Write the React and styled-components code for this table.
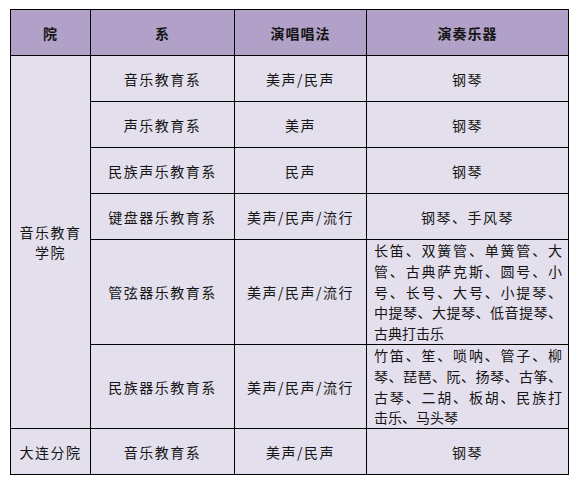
import React from "react";
import styled, { createGlobalStyle } from "styled-components";

const Global = createGlobalStyle`
  html, body {
    margin: 0;
    padding: 0;
    background: #ffffff;
  }
  body {
    font-family: "Noto Sans CJK SC", "Noto Sans", sans-serif;
    color: #151515;
  }
`;

const Page = styled.div`
  padding: 9px 0 0 10px;
`;

const Table = styled.table`
  border-collapse: collapse;
  table-layout: fixed;
  width: 558px;
  border: 1.5px solid #000;
`;

const HeadCell = styled.th`
  background: #b1a0c7;
  height: 45px;
  padding: 0;
  border: 1.5px solid #000;
  font-size: 14px;
  font-weight: 700;
  letter-spacing: 1px;
  text-align: center;
  vertical-align: middle;
`;

const Cell = styled.td`
  background: #e4dfec;
  height: ${p => p.$h || 45}px;
  padding: ${p => (p.$list ? "0 6px 0 7px" : "0 4px")};
  border: 1.5px solid #000;
  font-size: 14px;
  line-height: 20px;
  letter-spacing: ${p => (p.$list ? "0" : "1.5px")};
  text-align: center;
  vertical-align: middle;
`;

const Line = styled.span`
  display: block;
  white-space: nowrap;
  line-height: 20.8px;
  text-align: ${p => (p.$last ? "left" : "justify")};
  text-align-last: ${p => (p.$last ? "left" : "justify")};
`;

const rows = [
  { dept: "音乐教育系", style: "美声/民声", inst: "钢琴" },
  { dept: "声乐教育系", style: "美声", inst: "钢琴" },
  { dept: "民族声乐教育系", style: "民声", inst: "钢琴" },
  { dept: "键盘器乐教育系", style: "美声/民声/流行", inst: "钢琴、手风琴" },
  {
    dept: "管弦器乐教育系",
    style: "美声/民声/流行",
    h: 103,
    lines: [
      "长笛、双簧管、单簧管、大",
      "管、古典萨克斯、圆号、小",
      "号、长号、大号、小提琴、",
      "中提琴、大提琴、低音提琴、",
      "古典打击乐",
    ],
  },
  {
    dept: "民族器乐教育系",
    style: "美声/民声/流行",
    h: 83,
    lines: [
      "竹笛、笙、唢呐、管子、柳",
      "琴、琵琶、阮、扬琴、古筝、",
      "古琴、二胡、板胡、民族打",
      "击乐、马头琴",
    ],
  },
];

function App() {
  return (
    <Page>
      <Global />
      <Table>
        <colgroup>
          <col style={{ width: 80 }} />
          <col style={{ width: 144 }} />
          <col style={{ width: 132 }} />
          <col style={{ width: 202 }} />
        </colgroup>
        <thead>
          <tr>
            <HeadCell>院</HeadCell>
            <HeadCell>系</HeadCell>
            <HeadCell>演唱唱法</HeadCell>
            <HeadCell>演奏乐器</HeadCell>
          </tr>
        </thead>
        <tbody>
          {rows.map((r, i) => (
            <tr key={r.dept}>
              {i === 0 && (
                <Cell rowSpan={rows.length}>
                  音乐教育
                  <br />
                  学院
                </Cell>
              )}
              <Cell $h={r.h}>{r.dept}</Cell>
              <Cell $h={r.h}>{r.style}</Cell>
              {r.lines ? (
                <Cell $h={r.h} $list>
                  {r.lines.map((l, j) => (
                    <Line key={j} $last={j === r.lines.length - 1}>
                      {l}
                    </Line>
                  ))}
                </Cell>
              ) : (
                <Cell $h={r.h}>{r.inst}</Cell>
              )}
            </tr>
          ))}
          <tr>
            <Cell>大连分院</Cell>
            <Cell>音乐教育系</Cell>
            <Cell>美声/民声</Cell>
            <Cell>钢琴</Cell>
          </tr>
        </tbody>
      </Table>
    </Page>
  );
}

export default App;
